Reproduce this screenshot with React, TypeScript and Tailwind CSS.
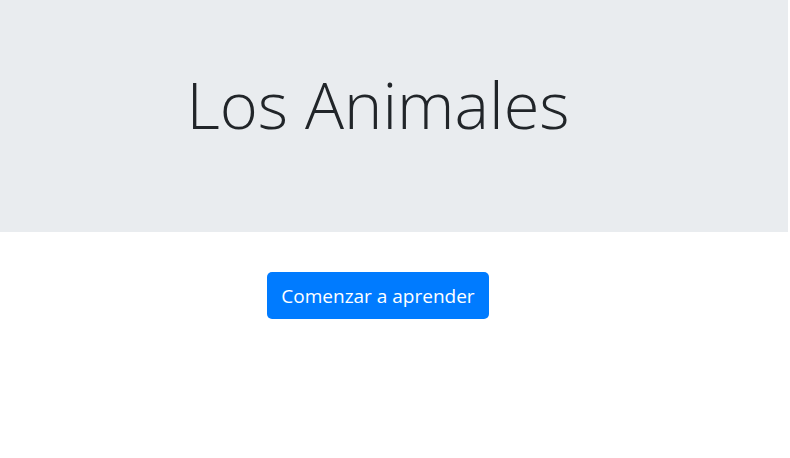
export default function App() {
  return (
    <main className="min-h-screen bg-white pr-0.5 font-['Open_Sans','Noto_Sans',sans-serif] text-[#212529]">
      <header className="bg-[#e9ecef] pt-16 pr-8 pb-[88px] text-center">
        <h1 className="text-[65px] leading-[80px] font-light">Los Animales</h1>
      </header>
      <div className="flex justify-center pt-10 pr-8">
        <button
          type="button"
          className="rounded-[5px] bg-[#007bff] px-3.5 pt-2.5 pb-2 text-[19px] leading-[29px] text-white"
        >
          Comenzar a aprender
        </button>
      </div>
    </main>
  );
}
